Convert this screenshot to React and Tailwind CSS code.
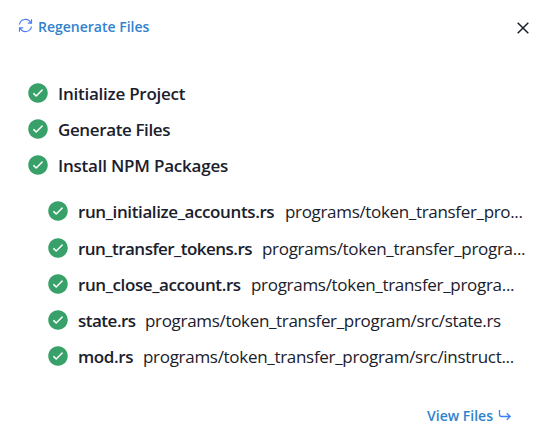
import { IoIosCheckmarkCircle } from "react-icons/io";

const steps = [
  { name: "Initialize Project", track: "tracking-[-0.25px]" },
  { name: "Generate Files", track: "tracking-[-0.38px]" },
  { name: "Install NPM Packages", track: "tracking-[-0.22px]" },
];

const files = [
  { name: "run_initialize_accounts.rs", path: "programs/token_transfer_pro...", w: "w-[207px] tracking-[-0.39px]", t: "tracking-[-0.33px]", h: "h-[37px]" },
  { name: "run_transfer_tokens.rs", path: "programs/token_transfer_progra...", w: "w-[184px] tracking-[-0.53px]", t: "tracking-[-0.3px]", h: "h-9" },
  { name: "run_close_account.rs", path: "programs/token_transfer_progra...", w: "w-[173px] tracking-[-0.4px]", t: "tracking-[-0.3px]", h: "h-9" },
  { name: "state.rs", path: "programs/token_transfer_program/src/state.rs", w: "w-[67px] tracking-[-0.5px]", t: "tracking-[-0.32px]", h: "h-9" },
  { name: "mod.rs", path: "programs/token_transfer_program/src/instruct...", w: "w-[65px] tracking-[-0.4px]", t: "tracking-[-0.3px]", h: "h-9" },
];

function Check() {
  return <IoIosCheckmarkCircle className="mr-2 size-6 shrink-0 text-[#38a169]" />;
}

export default function App() {
  return (
    <div className="flex h-[440px] w-[555px] flex-col overflow-hidden bg-white font-['Open_Sans','Noto_Sans',sans-serif] text-[#1a202c]">
      <header className="flex h-[54px] items-center justify-between pr-[22px] pl-[18px]">
        <button className="flex items-center gap-[5px] text-[14px] font-semibold text-[#3182ce]">
          <svg viewBox="0 0 15 15" className="-mt-[3px] size-[15px]" fill="none" stroke="#4f7df3" strokeWidth="1.2">
            <path d="M1.5 6.5A6 6 0 0 1 12.8 4.8M13.5 1.2v3.9H9.8M13.5 8.5A6 6 0 0 1 2.2 10.2M1.5 13.8V9.9h3.7" />
          </svg>
          <span className="-mt-px">Regenerate Files</span>
        </button>
        <button aria-label="Close" className="mt-[2px]">
          <svg viewBox="0 0 12 12" className="size-5 p-1" fill="none" stroke="currentColor" strokeWidth="1.5">
            <path d="M.7.7 11.3 11.3M11.3.7.7 11.3" />
          </svg>
        </button>
      </header>
      <ul className="pt-[21px] pl-[26px]">
        {steps.map((s) => (
          <li key={s.name} className="flex h-9 items-center text-[17px] font-semibold whitespace-nowrap">
            <Check />
            <span className={`pt-px ${s.track}`}>{s.name}</span>
          </li>
        ))}
      </ul>
      <ul className="pt-[10px] pl-[46px]">
        {files.map((f) => (
          <li key={f.name} className={`flex items-start text-[17px] leading-[37px] whitespace-nowrap ${f.h}`}>
            <span className="flex h-9 items-center">
              <Check />
            </span>
            <span className={`shrink-0 font-semibold ${f.w}`}>{f.name}</span>
            <span className={f.t}>{f.path}</span>
          </li>
        ))}
      </ul>
      <footer className="mt-auto flex h-[49px] items-center justify-end gap-1 pr-[43px] text-[14px] font-semibold text-[#3182ce]">
        <span>View Files</span>
        <svg viewBox="0 0 15 15" className="size-[15px]" fill="none" stroke="#3b82f6" strokeWidth="1.3">
          <path d="M2.5 2v4.5a2 2 0 0 0 2 2H13M9.8 5.2 13.1 8.5 9.8 11.8" />
        </svg>
      </footer>
    </div>
  );
}
